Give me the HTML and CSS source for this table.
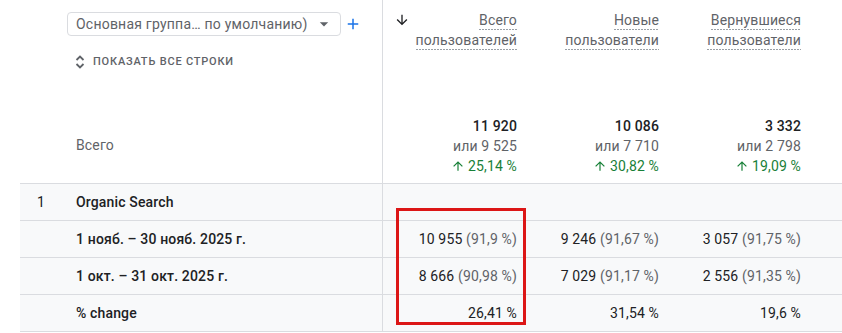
FILE: index.html
```html
<!DOCTYPE html>
<html lang="ru">
<head>
<meta charset="utf-8">
<title>Отчёт</title>
<link rel="stylesheet" href="styles.css">
</head>
<body>
<div class="report">
  <div class="row head">
    <div class="dim-head">
      <div class="group-row">
        <div class="select">
          <span class="select-text">Основная группа… по умолчанию)</span>
          <svg class="caret" width="20" height="20" viewBox="0 0 24 24"><path d="M7 10l5 5 5-5z" fill="#5f6368"/></svg>
        </div>
        <svg class="add" width="18" height="18" viewBox="0 0 24 24"><path d="M19 13h-6v6h-2v-6H5v-2h6V5h2v6h6v2z" fill="#1a73e8"/></svg>
      </div>
      <div class="show-rows">
        <svg class="unfold" width="10" height="16" viewBox="0 0 10 16"><path d="M1.5 6 L5 2.5 L8.5 6 M1.5 10 L5 13.5 L8.5 10" fill="none" stroke="#5f6368" stroke-width="1.8"/></svg>
        <span>ПОКАЗАТЬ ВСЕ СТРОКИ</span>
      </div>
      <div class="total-label">Всего</div>
    </div>

    <div class="metric-head first">
      <div class="title-wrap">
        <svg class="sort" width="16" height="16" viewBox="0 0 24 24"><path d="M20 12l-1.41-1.41L13 16.17V4h-2v12.17l-5.58-5.59L4 12l8 8 8-8z" fill="#202124"/></svg>
        <div class="title"><span class="u">Всего</span><br><span class="u">пользователей</span></div>
      </div>
      <div class="totals">
        <div class="total-val">11 920</div>
        <div class="total-prev">или 9 525</div>
        <div class="total-delta"><svg width="10" height="12" viewBox="4 2 16 20"><path d="M4 12l1.41 1.41L11 7.83V20h2V7.83l5.58 5.59L20 12l-8-8-8 8z" fill="#188038"/></svg>25,14 %</div>
      </div>
    </div>

    <div class="metric-head">
      <div class="title-wrap">
        <span></span>
        <div class="title"><span class="u">Новые</span><br><span class="u">пользователи</span></div>
      </div>
      <div class="totals">
        <div class="total-val">10 086</div>
        <div class="total-prev">или 7 710</div>
        <div class="total-delta"><svg width="10" height="12" viewBox="4 2 16 20"><path d="M4 12l1.41 1.41L11 7.83V20h2V7.83l5.58 5.59L20 12l-8-8-8 8z" fill="#188038"/></svg>30,82 %</div>
      </div>
    </div>

    <div class="metric-head">
      <div class="title-wrap">
        <span></span>
        <div class="title"><span class="u">Вернувшиеся</span><br><span class="u">пользователи</span></div>
      </div>
      <div class="totals">
        <div class="total-val">3 332</div>
        <div class="total-prev">или 2 798</div>
        <div class="total-delta"><svg width="10" height="12" viewBox="4 2 16 20"><path d="M4 12l1.41 1.41L11 7.83V20h2V7.83l5.58 5.59L20 12l-8-8-8 8z" fill="#188038"/></svg>19,09 %</div>
      </div>
    </div>
    <div class="filler"></div>
  </div>

  <div class="row data">
    <div class="dim"><span class="idx">1</span><span class="label">Organic Search</span></div>
    <div class="num first"></div>
    <div class="num"></div>
    <div class="num"></div>
    <div class="filler"></div>
  </div>

  <div class="row data">
    <div class="dim"><span class="idx"></span><span class="label">1 нояб. – 30 нояб. 2025 г.</span></div>
    <div class="num first">10 955&nbsp;<span class="pct">(91,9 %)</span></div>
    <div class="num">9 246&nbsp;<span class="pct">(91,67 %)</span></div>
    <div class="num">3 057&nbsp;<span class="pct">(91,75 %)</span></div>
    <div class="filler"></div>
  </div>

  <div class="row data">
    <div class="dim"><span class="idx"></span><span class="label">1 окт. – 31 окт. 2025 г.</span></div>
    <div class="num first">8 666&nbsp;<span class="pct">(90,98 %)</span></div>
    <div class="num">7 029&nbsp;<span class="pct">(91,17 %)</span></div>
    <div class="num">2 556&nbsp;<span class="pct">(91,35 %)</span></div>
    <div class="filler"></div>
  </div>

  <div class="row data">
    <div class="dim"><span class="idx"></span><span class="label">% change</span></div>
    <div class="num first">26,41 %</div>
    <div class="num">31,54 %</div>
    <div class="num">19,6 %</div>
    <div class="filler"></div>
  </div>

  <div class="highlight"></div>
</div>
</body>
</html>
```

FILE: styles.css
```css
html, body {
  margin: 0;
  padding: 0;
  background: #ffffff;
}

body {
  font-family: Roboto, "Noto Sans", "Liberation Sans", sans-serif;
  color: #202124;
  overflow: hidden;
}

.report {
  position: relative;
  margin-left: 20px;
  width: 822px;
  font-size: 14px;
  line-height: 20px;
  letter-spacing: 0.15px;
}

.row {
  display: grid;
  grid-template-columns: 362px 143px 142px 142px 1fr;
  border-bottom: 1px solid #dadce0;
  box-sizing: border-box;
}

.head {
  height: 184px;
  background: #ffffff;
}

.data {
  height: 37px;
  background: #f8f9fa;
}

/* dimension header */
.dim-head {
  display: flex;
  flex-direction: column;
}

.group-row {
  display: flex;
  align-items: center;
  margin-top: 12px;
  margin-left: 47px;
}

.select {
  box-sizing: border-box;
  width: 274px;
  height: 24px;
  border: 1px solid #dadce0;
  border-radius: 4px;
  display: flex;
  align-items: center;
  justify-content: space-between;
  padding-left: 8px;
  padding-right: 6px;
  color: #5f6368;
  font-size: 14px;
  line-height: 20px;
  letter-spacing: 0.22px;
}

.caret {
  display: block;
}

.add {
  display: block;
  margin-left: 3px;
}

.show-rows {
  display: flex;
  align-items: center;
  gap: 8px;
  margin-top: 18px;
  margin-left: 55px;
  height: 16px;
  font-size: 11px;
  font-weight: 500;
  letter-spacing: 0.8px;
  color: #5f6368;
}

.unfold {
  display: block;
}

.total-label {
  margin-top: auto;
  margin-bottom: 28px;
  margin-left: 56px;
  color: #5f6368;
}

/* metric header */
.metric-head {
  display: flex;
  flex-direction: column;
  justify-content: space-between;
  padding: 10px 8px 7px 11px;
}

.metric-head.first,
.num.first {
  border-left: 1px solid #dadce0;
}

.title-wrap {
  display: flex;
  justify-content: space-between;
  align-items: flex-start;
}

.sort {
  display: block;
  margin-top: 2px;
}

.title {
  text-align: right;
  color: #5f6368;
}

.u {
  background-image: linear-gradient(to right, #9aa0a6 2px, transparent 2px);
  background-size: 3px 1px;
  background-repeat: repeat-x;
  background-position: 0 100%;
  padding-bottom: 2px;
}

.totals {
  text-align: right;
}

.total-val {
  font-weight: 500;
  color: #202124;
}

.total-prev {
  color: #5f6368;
}

.total-delta {
  display: flex;
  justify-content: flex-end;
  align-items: center;
  gap: 5px;
  color: #188038;
}

.total-delta svg {
  display: block;
}

/* data rows */
.dim {
  display: flex;
  align-items: center;
}

.idx {
  box-sizing: border-box;
  width: 56px;
  padding-left: 17px;
  color: #202124;
}

.label {
  font-weight: 500;
  color: #202124;
}

.num {
  display: flex;
  justify-content: flex-end;
  align-items: center;
  padding-right: 8px;
  color: #202124;
  white-space: nowrap;
}

.pct {
  color: #5f6368;
}

/* annotation overlay */
.highlight {
  position: absolute;
  left: 376px;
  top: 208px;
  width: 130px;
  height: 117px;
  box-sizing: border-box;
  border: 3px solid #dc1616;
  pointer-events: none;
}
```
